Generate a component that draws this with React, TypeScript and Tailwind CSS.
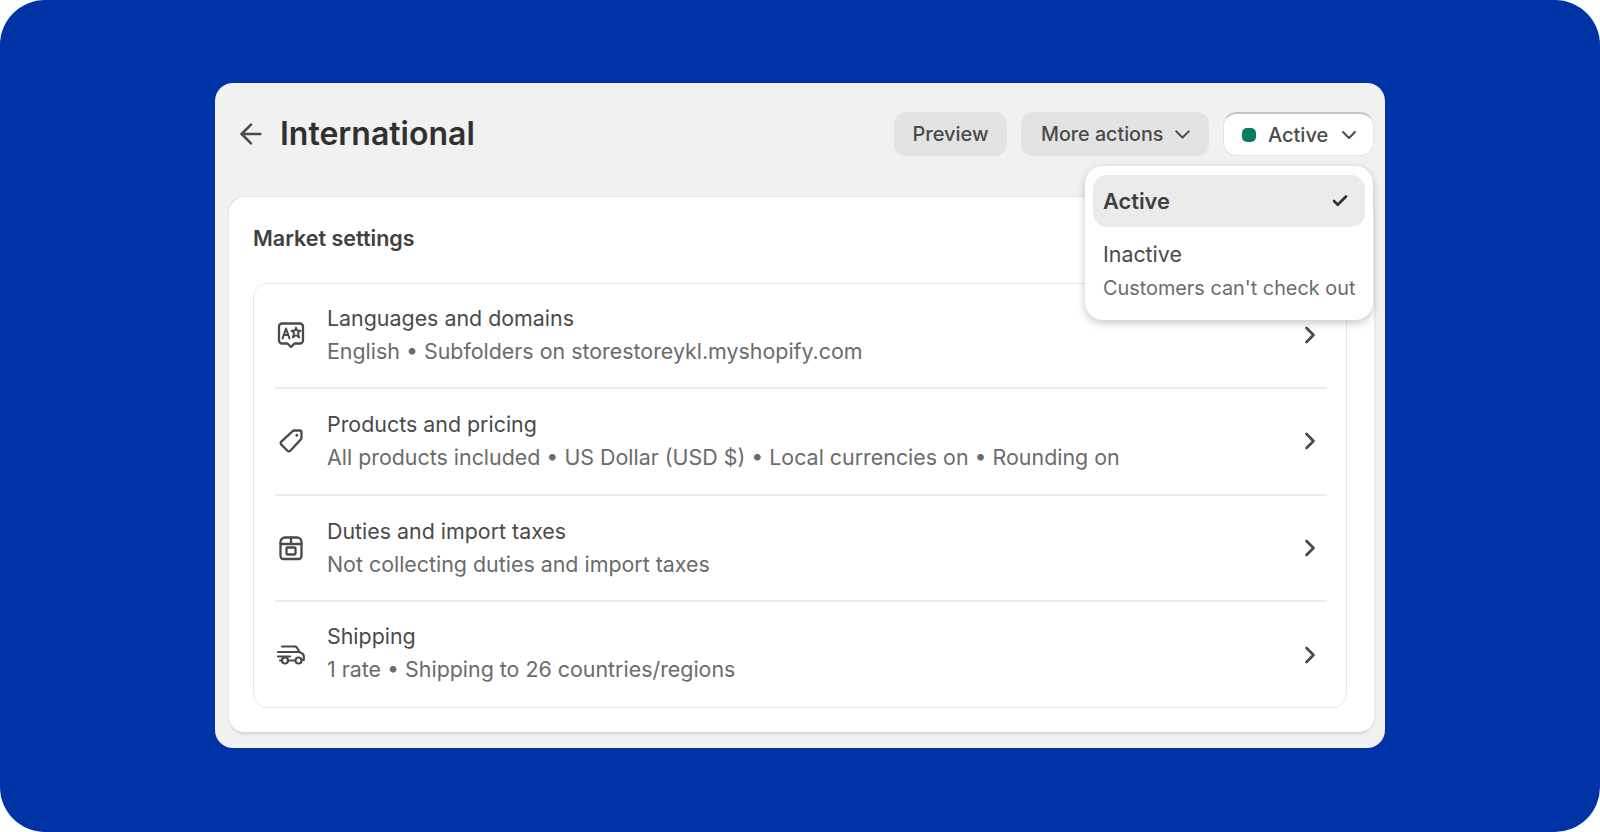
import { ArrowLeft, Check, ChevronDown, ChevronRight } from "lucide-react"
import type { ReactNode } from "react"

const LanguageIcon = () => (
  <svg width="30" height="30" viewBox="0 0 30 30" fill="none" stroke="#4a4a4a" strokeWidth="2.300" strokeLinecap="round" strokeLinejoin="round">
    <path d="M6 3.500h18a3 3 0 0 1 3 3v14a3 3 0 0 1-3 3h-5.500L15 27l-3.500-3.500H6a3 3 0 0 1-3-3v-14a3 3 0 0 1 3-3Z" />
    <path d="M6.500 18.500 10 8.500l3.500 10M7.800 15h4.400" strokeWidth="2" />
    <path d="m20 7.500 1.200 3.200h3.300l-2.600 2.200 1.300 4.600-3.200-2.400-3.200 2.400 1.300-4.600-2.600-2.200h3.300Z" strokeWidth="1.800" />
  </svg>
)

const TagIcon = () => (
  <svg width="30" height="30" viewBox="0 0 30 30" fill="none" stroke="#4a4a4a" strokeWidth="2.300" strokeLinecap="round" strokeLinejoin="round">
    <path d="M18.500 4.500h5a2 2 0 0 1 2 2v5a3 3 0 0 1-.9 2.100L14.300 24.700a2 2 0 0 1-2.900 0l-6.100-6.100a2 2 0 0 1 0-2.900L16.400 5.400a3 3 0 0 1 2.100-.9Z" />
    <circle cx="20.800" cy="9.300" r="1" fill="#4a4a4a" strokeWidth="1" />
  </svg>
)

const BoxIcon = () => (
  <svg width="30" height="30" viewBox="0 0 30 30" fill="none" stroke="#4a4a4a" strokeWidth="2.300" strokeLinecap="round" strokeLinejoin="round">
    <path d="M9 4.500h12a4.500 4.500 0 0 1 4.500 4.500v14a3 3 0 0 1-3 3h-15a3 3 0 0 1-3-3V9A4.500 4.500 0 0 1 9 4.500Z" />
    <path d="M4.500 11h21M15 4.500V11" />
    <rect x="10.500" y="14.500" width="9" height="7" rx="1" />
  </svg>
)

const TruckIcon = () => (
  <svg width="30" height="30" viewBox="0 0 30 30" fill="none" stroke="#4a4a4a" strokeWidth="2.200" strokeLinecap="round" strokeLinejoin="round">
    <path d="M6 6.500h13c.8 0 1.400.4 1.800 1l3.200 5c2 .5 3.800 2 3.800 4v3.500h-2" />
    <path d="M2 12h21M2 16.500h12" />
    <path d="M4 20.500h2M12 20.500h7" />
    <circle cx="9" cy="20.500" r="3" />
    <circle cx="22.500" cy="20.500" r="3" />
  </svg>
)

const rows: { icon: ReactNode; title: string; sub: string; rowClass: string; textClass: string }[] = [
  { icon: <LanguageIcon />, title: "Languages and domains", sub: "English • Subfolders on storestoreykl.myshopify.com", rowClass: "h-[105px] pb-[2px] border-b-2 border-[#ececec]", textClass: "" },
  { icon: <TagIcon />, title: "Products and pricing", sub: "All products included • US Dollar (USD $) • Local currencies on • Rounding on", rowClass: "h-[107px] pb-[2px] border-b-2 border-[#ececec]", textClass: "" },
  { icon: <BoxIcon />, title: "Duties and import taxes", sub: "Not collecting duties and import taxes", rowClass: "h-[106px] border-b-2 border-[#ececec]", textClass: "" },
  { icon: <TruckIcon />, title: "Shipping", sub: "1 rate • Shipping to 26 countries/regions", rowClass: "h-[105px]", textClass: "pb-[3px]" },
]

export default function App() {
  return (
    <div className="w-[1600px] h-[832px] bg-white overflow-hidden font-['Inter',sans-serif]">
      <div className="h-full bg-[#0033a5] rounded-[45px] flex justify-center items-start pt-[83px]">
        <div className="relative w-[1170px] h-[665px] bg-[#f1f1f1] rounded-[18px] flex flex-col">
          {/* header */}
          <div className="h-[114px] flex items-start justify-between pl-[20px] pr-[11px] pt-[29px]">
            <div className="flex items-center gap-[13px] h-[44px]">
              <ArrowLeft size={32} strokeWidth={1.900} className="text-[#4a4a4a]" />
              <h1 className="text-[32px] font-semibold text-[#303030]">International</h1>
            </div>
            <div className="flex gap-[14px] text-[20px] text-[#4a4a4a] font-medium">
              <button className="w-[113px] h-[44px] rounded-[12px] bg-[#e3e3e3]">Preview</button>
              <button className="w-[188px] h-[44px] rounded-[12px] bg-[#e3e3e3] flex items-center pl-[20px] pt-[1px] gap-[7px] text-[19.7px]">
                More actions
                <ChevronDown size={25} strokeWidth={2} />
              </button>
              <button className="w-[151px] h-[44px] rounded-[14px] bg-white border border-[#e3e3e3] border-t-2 border-t-[#c4c4c4] flex items-center pl-[18px] gap-[12px]">
                <span className="w-[14px] h-[14px] rounded-[5px] bg-[#0a7d5e]" />
                Active
                <ChevronDown size={24} strokeWidth={2} className="-ml-[3px]" />
              </button>
            </div>
          </div>

          {/* market settings card */}
          <div className="ml-[14px] mr-[11px] flex-1 mb-[14px] bg-white rounded-[16px] border-b-2 border-[#dcdcdc] pl-[24px] pr-[27px] flex flex-col shadow-[0_0_2px_#c8c8c8]">
            <h2 className="h-[86px] flex items-center text-[21.5px] font-semibold text-[#404040] pb-[4px]">Market settings</h2>
            <div className="h-[425px] border border-[#e8e8e8] rounded-[14px] pl-[21px] pr-[19px]">
              {rows.map((row) => (
                <div key={row.title} className={`flex items-center ${row.rowClass}`}>
                  <div className="w-[32px] flex justify-center shrink-0">{row.icon}</div>
                  <div className={`ml-[20px] flex-1 ${row.textClass}`}>
                    <div className="text-[21.4px] leading-[33px] text-[#4a4a4a]">{row.title}</div>
                    <div className="text-[21.4px] leading-[33px] text-[#6b6b6b]">{row.sub}</div>
                  </div>
                  <ChevronRight size={28} strokeWidth={2.300} className="text-[#4a4a4a] mr-[3px]" />
                </div>
              ))}
            </div>
          </div>

          {/* status dropdown */}
          <div className="absolute left-[870px] top-[83px] w-[288px] h-[154px] bg-white rounded-[18px] pt-[9px] px-[8px] shadow-[0_3px_8px_rgba(0,0,0,0.22)]">
            <div className="h-[52px] rounded-[14px] bg-[#ebebeb] pl-[10px] pr-[16px] flex items-center justify-between">
              <span className="text-[21.8px] font-semibold text-[#404040]">Active</span>
              <Check size={18} strokeWidth={3.500} className="text-[#303030]" />
            </div>
            <div className="pl-[10px] pt-[11px]">
              <div className="text-[21.4px] leading-[33px] text-[#4a4a4a]">Inactive</div>
              <div className="text-[19.85px] leading-[33px] pt-[1px] text-[#6b6b6b] whitespace-nowrap">Customers can't check out</div>
            </div>
          </div>
        </div>
      </div>
    </div>
  )
}
